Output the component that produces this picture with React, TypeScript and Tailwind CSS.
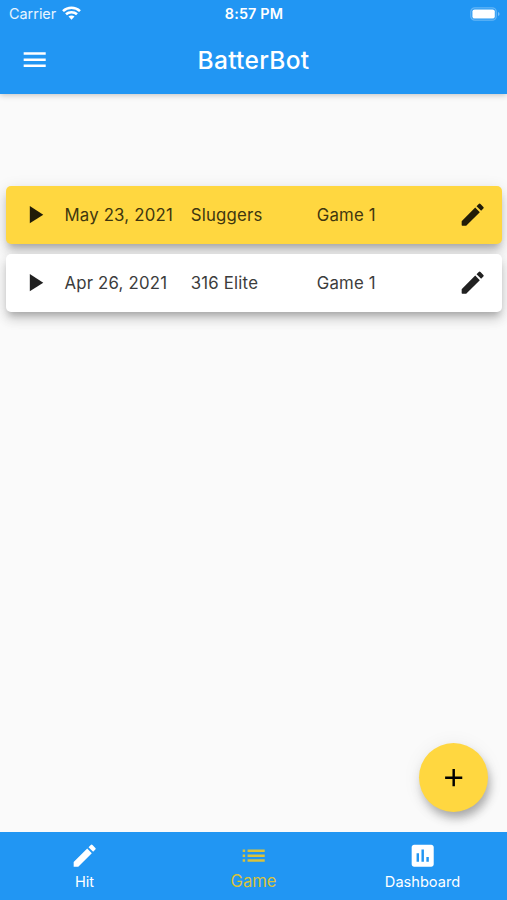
import React from "react";

const paths = {
  menu: "M3 18h18v-2H3v2zm0-5h18v-2H3v2zm0-7v2h18V6H3z",
  play: "M8 5v14l11-7z",
  edit: "M3 17.25V21h3.75L17.81 9.94l-3.75-3.75L3 17.25zM20.71 7.04a.996.996 0 0 0 0-1.41l-2.34-2.34a.996.996 0 0 0-1.41 0l-1.83 1.83 3.75 3.75 1.83-1.83z",
  editRounded:
    "M3 17.46v3.04c0 .28.22.5.5.5h3.04c.13 0 .26-.05.35-.15L17.81 9.94l-3.75-3.75L3.15 17.1c-.1.1-.15.22-.15.36zM20.71 7.04a.996.996 0 0 0 0-1.41l-2.34-2.34a.996.996 0 0 0-1.41 0l-1.83 1.83 3.75 3.75 1.83-1.83z",
  add: "M19 13h-6v6h-2v-6H5v-2h6V5h2v6h6v2z",
  list: "M3 13h2v-2H3v2zm0 4h2v-2H3v2zm0-8h2V7H3v2zm4 4h14v-2H7v2zm0 4h14v-2H7v2zM7 7v2h14V7H7z",
  chart: "M19 3H5c-1.1 0-2 .9-2 2v14c0 1.1.9 2 2 2h14c1.1 0 2-.9 2-2V5c0-1.1-.9-2-2-2zM9 17H7v-7h2v7zm4 0h-2V7h2v10zm4 0h-2v-4h2v4z",
};

function Icon({ name, className = "" }: { name: keyof typeof paths; className?: string }) {
  return (
    <svg viewBox="0 0 24 24" fill="currentColor" className={`size-[29.4px] shrink-0 ${className}`}>
      <path d={paths[name]} />
    </svg>
  );
}

function GameRow({ date, team, game, active = false }: { date: string; team: string; game: string; active?: boolean }) {
  return (
    <div
      className={`flex h-[58px] items-center rounded-[5px] pl-[14px] pr-[15px] text-[16.8px] tracking-[0.2px] shadow-[0_6px_6px_-3px_rgba(0,0,0,0.18),0_8px_12px_rgba(0,0,0,0.12),0_3px_16px_rgba(0,0,0,0.11)] ${
        active ? "bg-[#ffd740] text-[#40360f]" : "bg-white text-[#3c3c3c]"
      }`}
    >
      <Icon name="play" className={active ? "text-[#211c08]" : "text-[#212121]"} />
      <span className="ml-[15px] w-[126.3px] whitespace-nowrap pt-[2px]">{date}</span>
      <span className="w-[126px] whitespace-nowrap pt-[2px]">{team}</span>
      <span className="whitespace-nowrap pt-[2px]">{game}</span>
      <Icon name="editRounded" className={`ml-auto ${active ? "text-[#211c08]" : "text-[#212121]"}`} />
    </div>
  );
}

function Tab({ icon, label, active = false }: { icon: keyof typeof paths; label: string; active?: boolean }) {
  return (
    <div className={`flex flex-1 flex-col items-center pt-[9px] ${active ? "text-[#d9c23c]" : "text-white"}`}>
      <Icon name={icon} />
      <span className={`leading-[20px] ${active ? "mt-px text-[16.6px]" : "mt-[2px] text-[14.6px]"}`}>{label}</span>
    </div>
  );
}

export default function App() {
  return (
    <div className="relative flex h-[900px] w-[507px] flex-col overflow-hidden bg-[#fafafa] font-['Inter','Liberation_Sans',sans-serif]">
      <header className="h-[94px] shrink-0 bg-[#2196f3] text-white shadow-[0_1px_6px_rgba(0,0,0,0.24)]">
        <div className="grid h-[27px] grid-cols-3 items-center pl-[9px] pr-[7px]">
          <div className="flex items-center gap-[6px] text-[14.4px] text-white/90">
            <span>Carrier</span>
            <svg viewBox="0 0 19 14" className="h-[14px] w-[19px] text-white" fill="none" stroke="currentColor" strokeWidth="2.6">
              <path d="M1 5.1C5.8 .6 13.2 .6 18 5.1" />
              <path d="M4 8.3C7 5.5 12 5.5 15 8.3" />
              <path d="M6.5 10.6c1.7-1.5 4.3-1.5 6 0L9.5 13.8z" fill="currentColor" stroke="none" />
            </svg>
          </div>
          <span className="-ml-px whitespace-nowrap text-center text-[14.4px] font-semibold tracking-[0.15px]">8:57 PM</span>
          <svg viewBox="0 0 30 14" className="h-[14px] w-[30px] justify-self-end">
            <rect x=".8" y=".8" width="25.4" height="12.4" rx="4" fill="none" stroke="white" strokeOpacity=".3" strokeWidth="1.3" />
            <rect x="2.4" y="2.4" width="22.4" height="9.2" rx="2.2" fill="white" />
            <path d="M28 5v4q1.6-.7 1.6-2T28 5z" fill="white" fillOpacity=".4" />
          </svg>
        </div>
        <div className="grid h-[66px] grid-cols-[1fr_auto_1fr] items-center pl-[20.3px] pr-[20.3px]">
          <Icon name="menu" />
          <h1 className="text-[24.5px] font-medium tracking-[0.3px]">BatterBot</h1>
        </div>
      </header>

      <main className="flex flex-1 flex-col gap-[10px] pl-[6px] pr-[5px] pt-[92px]">
        <GameRow date="May 23, 2021" team="Sluggers" game="Game 1" active />
        <GameRow date="Apr 26, 2021" team="316 Elite" game="Game 1" />
      </main>

      <button
        aria-label="Add game"
        className="absolute bottom-[88px] right-[19px] flex size-[69px] items-center justify-center rounded-full bg-[#ffd740] text-black shadow-[3px_7px_8px_-2px_rgba(0,0,0,0.2),2px_7px_12px_rgba(0,0,0,0.14),0_1px_20px_rgba(0,0,0,0.06)]"
      >
        <Icon name="add" />
      </button>

      <nav className="relative flex h-[68px] shrink-0 bg-[#2196f3]">
        <Tab icon="edit" label="Hit" />
        <Tab icon="list" label="Game" active />
        <Tab icon="chart" label="Dashboard" />
      </nav>
    </div>
  );
}
